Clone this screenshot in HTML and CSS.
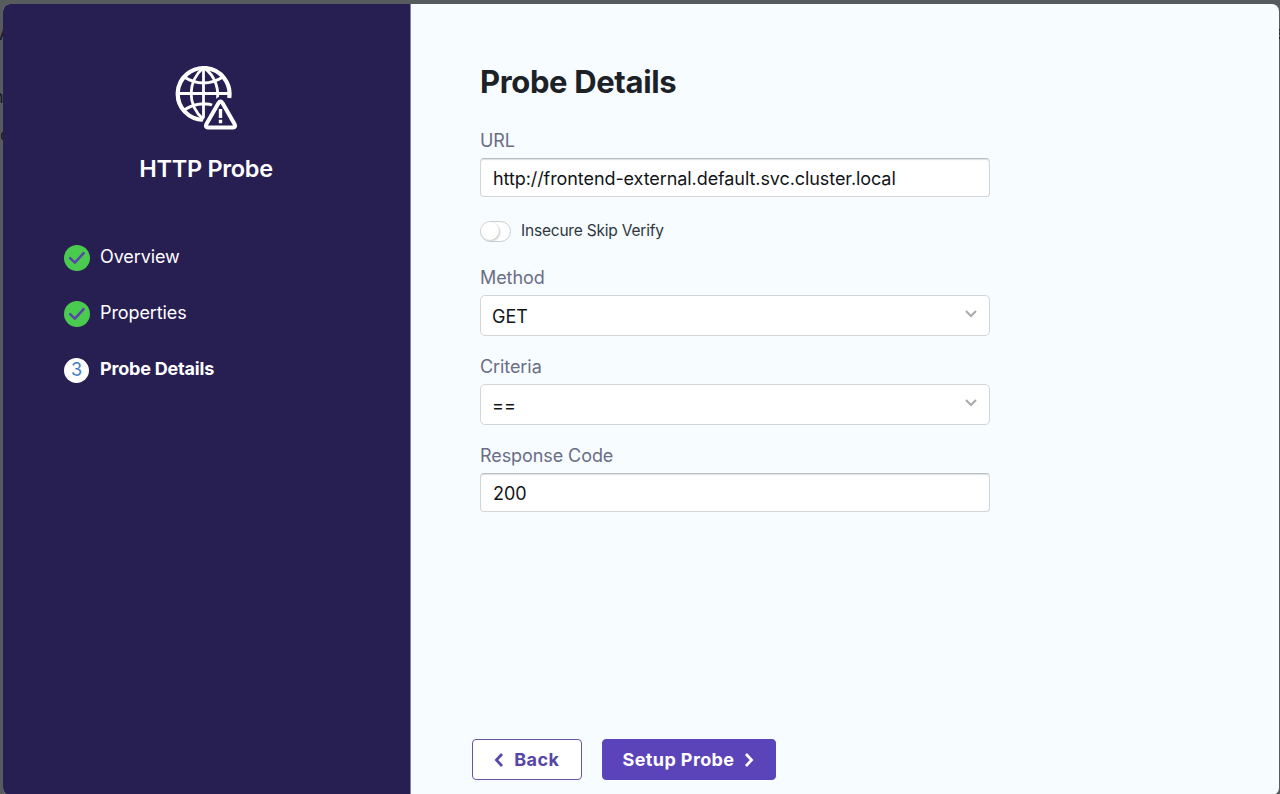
FILE: index.html
```html
<!DOCTYPE html>
<html lang="en">
<head>
<meta charset="utf-8">
<title>HTTP Probe</title>
<link rel="stylesheet" href="styles.css">
</head>
<body>
<div class="backdrop">
  <span class="peek peek-a">A</span>
  <span class="peek peek-h">h</span>
  <span class="peek peek-o">o</span>
  <span class="peek peek-s">s</span>
</div>
<div class="modal">
  <aside class="sidebar">
    <svg class="probe-icon" width="64" height="66" viewBox="0 0 64 66" fill="none" stroke="#fff">
      <g stroke-width="2.8">
        <path d="M28.5 54.8A25.9 25.9 0 1 1 54.2 33" stroke-width="4.2"/>
        <path d="M28.5 3V54M3 28.5H55M9 12Q28.5 24 48 12M9 45Q25 35 40 41"/>
        <path d="M28.5 2.5C12 17 12 40 28.5 54.5M28.5 2.5C41 11 45 26 41.5 39"/>
      </g>
      <path d="M43.3 37.2Q45.5 34.2 47.7 37.2L60.3 59Q61.7 62.3 58.3 62.6H32.7Q29.3 62.3 30.7 59Z" fill="#271e52" stroke="#271e52" stroke-width="8"/>
      <path d="M43.5 38Q45.5 35 47.5 38L59.7 59.3Q61 62.3 57.9 62.6H33.1Q30 62.3 31.3 59.3Z" fill="#271e52" stroke-width="4" stroke-linejoin="round"/>
      <path d="M45.5 44V53M45.5 54.8V58.2" stroke-width="3.4"/>
    </svg>
    <h2 class="probe-name">HTTP Probe</h2>
    <ol class="steps">
      <li class="step"><span class="badge done"><svg width="26" height="26" viewBox="0 0 26 26"><path d="M6.2 13.2 10.9 17.6 19.6 8.2"/></svg></span>Overview</li>
      <li class="step"><span class="badge done"><svg width="26" height="26" viewBox="0 0 26 26"><path d="M6.2 13.2 10.9 17.6 19.6 8.2"/></svg></span>Properties</li>
      <li class="step current"><span class="badge number">3</span>Probe Details</li>
    </ol>
  </aside>
  <main class="content">
    <form class="form">
      <h1 class="title">Probe Details</h1>
      <label class="label">URL</label>
      <div class="input"><span class="url">http://frontend-external.default.svc.cluster.local</span></div>
      <div class="toggle-row"><span class="toggle"><span class="knob"></span></span><span class="toggle-label">Insecure Skip Verify</span></div>
      <label class="label">Method</label>
      <div class="select"><span>GET</span><svg class="chevron" width="14" height="10" viewBox="0 0 14 10"><path d="M2 2 7 7 12 2"/></svg></div>
      <label class="label">Criteria</label>
      <div class="select"><span class="operator">==</span><svg class="chevron" width="14" height="10" viewBox="0 0 14 10"><path d="M2 2 7 7 12 2"/></svg></div>
      <label class="label">Response Code</label>
      <div class="input">200</div>
    </form>
    <footer class="actions">
      <div class="button back"><svg width="10" height="14" viewBox="0 0 10 14"><path d="M8 1 2.4 7 8 13"/></svg><span>Back</span></div>
      <div class="button setup"><span>Setup Probe</span><svg width="10" height="14" viewBox="0 0 10 14"><path d="M2 1 7.6 7 2 13"/></svg></div>
    </footer>
  </main>
</div>
</body>
</html>
```

FILE: styles.css
```css
* { box-sizing: border-box; }
body {
  margin: 0;
  height: 794px;
  padding: 4px 1.5px 0 3px;
  overflow: hidden;
  background: #565b5e;
  font-family: Inter, "Liberation Sans", sans-serif;
}
.peek { position: absolute; color: #161a26; font-size: 18px; line-height: 20px; }
.peek-a { left: -1px; top: 24px; }
.peek-h { left: -7px; top: 87px; }
.peek-o { left: 0; top: 125px; }
.peek-s { left: 1276px; top: 23px; }
.modal {
  position: relative;
  display: flex;
  height: 791px;
  border-radius: 7px;
  overflow: hidden;
  background: #f6fcff;
}
.sidebar {
  width: 408px;
  flex: none;
  padding-top: 61px;
  background: #271e52;
  border-right: 1px solid #85809c;
  color: #fff;
}
.probe-icon { display: block; margin-left: 172px; }
.probe-name {
  margin: 22px 0 0;
  padding-right: 1px;
  text-align: center;
  font-size: 23.5px;
  line-height: 32px;
  font-weight: 600;
  letter-spacing: -.3px;
}
.steps { list-style: none; margin: 58px 0 0 61px; padding: 0; }
.step {
  display: flex;
  align-items: center;
  height: 28px;
  margin-bottom: 28px;
  font-size: 18px;
  line-height: 28px;
  letter-spacing: -.1px;
  gap: 10px;
}
.current { font-weight: 700; letter-spacing: -.2px; }
.badge {
  display: flex;
  align-items: center;
  justify-content: center;
  width: 26px;
  height: 26px;
  margin-top: 2px;
  border-radius: 50%;
  flex: none;
}
.done { background: #4bca50; }
.done path { fill: none; stroke: #5746a5; stroke-width: 2.5; stroke-linecap: round; stroke-linejoin: round; }
.number { width: 25px; height: 25px; margin-right: 1px; background: #fff; color: #3e7fc3; font-size: 18px; font-weight: 400; }
.content {
  flex: 1;
  display: flex;
  flex-direction: column;
  justify-content: space-between;
  padding: 58px 0 15px 61px;
}
.form { width: 518px; padding-left: 8px; }
.title { margin: 0 0 28px; font-size: 31px; line-height: 40px; font-weight: 700; letter-spacing: -.35px; color: #1c2127; }
.label { display: block; height: 28px; font-size: 18px; line-height: 22px; letter-spacing: -.08px; color: #6b6d85; }
.input, .select {
  display: flex;
  align-items: center;
  border: 1px solid #d3d5d7;
  border-radius: 4px;
  background: #fff;
  color: #111518;
  font-size: 18px;
}
.input { height: 39px; padding: 1px 12px 0; letter-spacing: -.08px; border-top-color: #b9c0c4; box-shadow: inset 0 1px 1px #dce0e2; }
.toggle-row { display: flex; align-items: center; gap: 10px; height: 21px; margin: 24px 0 25px; }
.toggle { width: 31px; height: 21px; border: 1px solid #c9ccd0; border-radius: 11px; background: #fff; }
.knob { display: block; width: 18px; height: 18px; border-radius: 50%; background: #fff; box-shadow: 1px 1px 2px #c5c5c5; }
.toggle-label { font-size: 15.5px; line-height: 20px; letter-spacing: -.2px; padding-bottom: 1px; color: #30363d; }
.select { height: 41px; justify-content: space-between; padding: 1px 11px 0; border-radius: 5px; margin-bottom: 20.2px; }
.chevron { margin-top: -4px; }
.chevron path { fill: none; stroke: #aaa; stroke-width: 2; }
.actions { display: flex; gap: 20px; }
.button {
  display: flex;
  align-items: center;
  justify-content: center;
  gap: 10px;
  height: 41px;
  border: 1.5px solid #5b44ba;
  border-radius: 4px;
  font-size: 18px;
  font-weight: 700;
  letter-spacing: .4px;
}
.button path { fill: none; stroke: currentColor; stroke-width: 2.7; }
.back { width: 109.5px; background: #fff; color: #5746a8; border-color: #6756ac; }
.setup { width: 174px; background: #5b43ba; color: #fff; }
```
